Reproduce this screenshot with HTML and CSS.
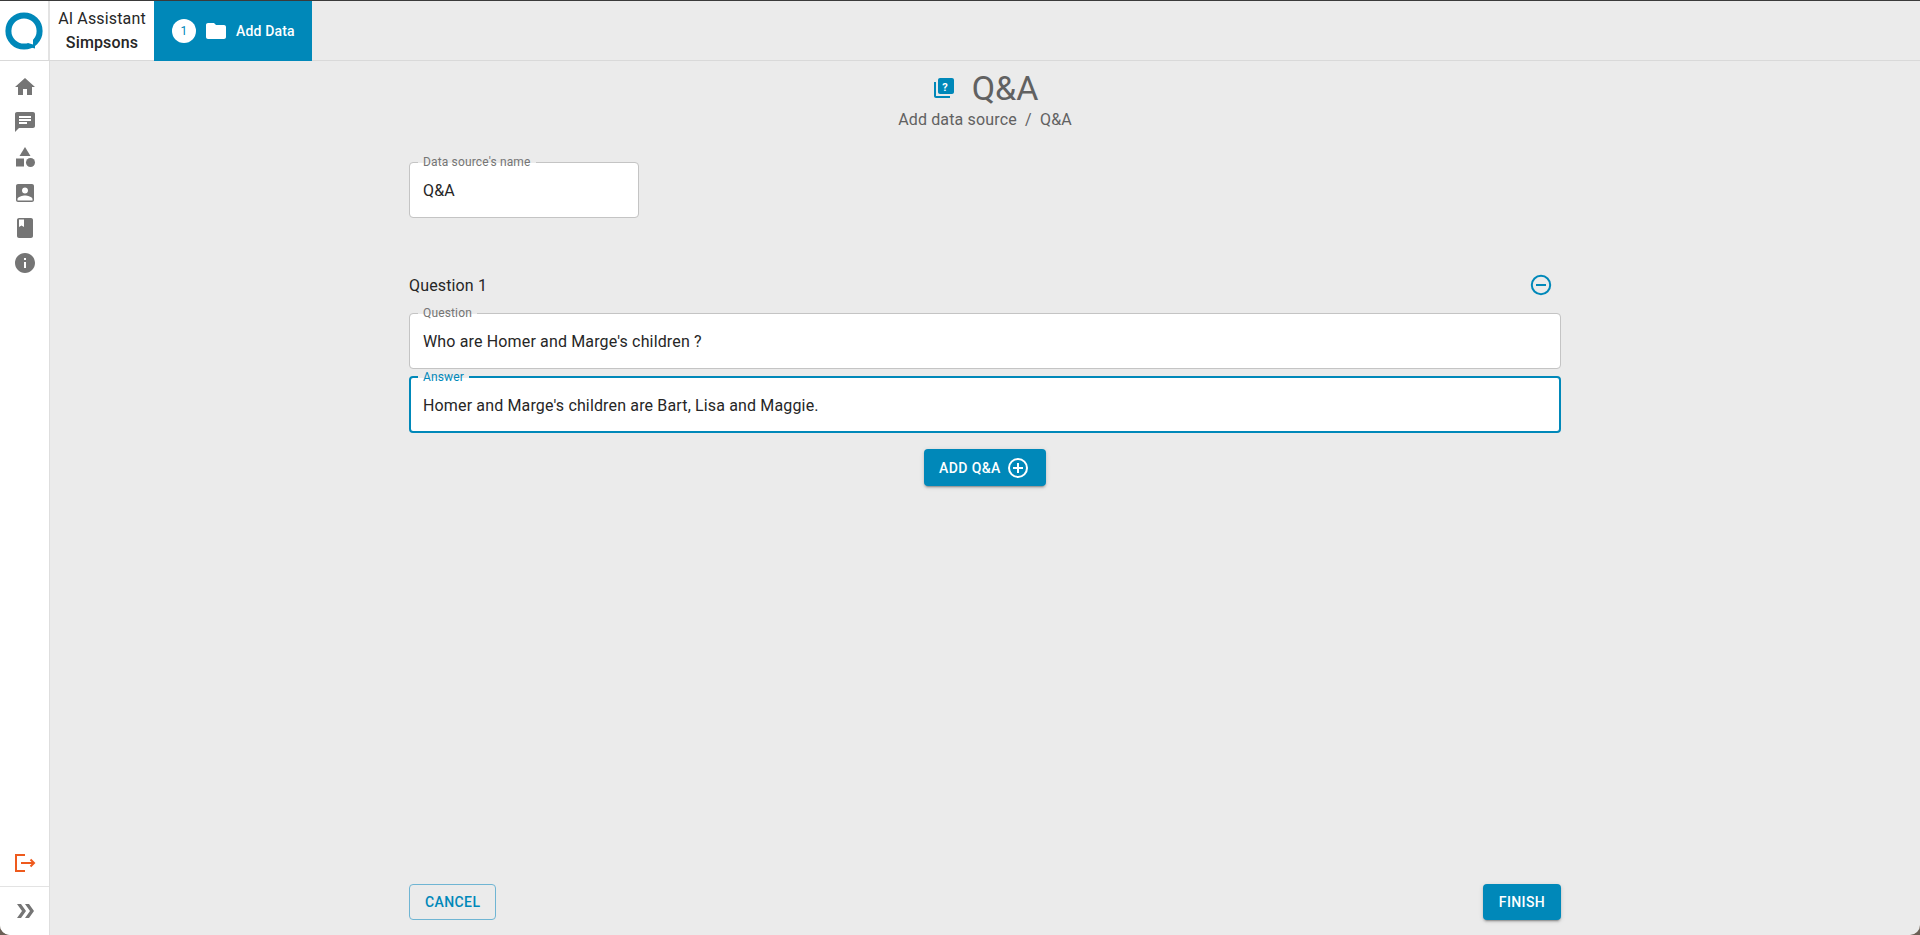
FILE: index.html
```html
<!DOCTYPE html>
<html lang="en">
<head>
    <meta charset="UTF-8">
    <meta name="viewport" content="width=device-width, initial-scale=1.0">
    <title>Q&amp;A</title>
    <link rel="stylesheet" href="styles.css">
</head>
<body>
    <div class="app">
        <header class="topbar">
            <div class="logo-cell">
                <svg class="logo" viewBox="0 0 38 38" width="38" height="38">
                    <circle cx="19" cy="19" r="15.600" fill="none" stroke="#0088b9" stroke-width="6"/>
                    <path fill="#0088b9" d="M24 35l6 1.500V26z"/>
                    <path fill="#fff" d="M18 29.500l10 3v-8z"/>
                </svg>
            </div>
            <div class="project">
                <span>AI Assistant</span>
                <strong>Simpsons</strong>
            </div>
            <div class="step">
                <span class="step-num">1</span>
                <svg viewBox="0 0 24 24" width="24" height="24"><path fill="#fff" d="M10 4H4c-1.100 0-2 .9-2 2v12c0 1.100.9 2 2 2h16c1.100 0 2-.9 2-2V8c0-1.100-.9-2-2-2h-8l-2-2z"/></svg>
                <span class="step-label">Add Data</span>
            </div>
        </header>

        <div class="layout">
            <nav class="sidebar">
                <div class="nav-icons">
                    <svg viewBox="0 0 24 24"><path d="M10 20v-6h4v6h5v-8h3L12 3 2 12h3v8z"/></svg>
                    <svg viewBox="0 0 24 24"><path d="M20 2H4c-1.100 0-2 .9-2 2v18l4-4h14c1.100 0 2-.9 2-2V4c0-1.100-.9-2-2-2zM6 9h12v2H6V9zm8 5H6v-2h8v2zm4-6H6V6h12v2z"/></svg>
                    <svg viewBox="0 0 24 24"><path d="M12 2l5.500 9h-11z"/><circle cx="17.500" cy="17.500" r="4.500"/><path d="M3 13.500h8v8H3z"/></svg>
                    <svg viewBox="0 0 24 24"><path d="M5 3h14c1.100 0 2 .9 2 2v14c0 1.100-.9 2-2 2H5c-1.100 0-2-.9-2-2V5c0-1.100.9-2 2-2zm7 3.500c-1.700 0-3 1.300-3 3s1.300 3 3 3 3-1.300 3-3-1.300-3-3-3zM4.500 19.500h15V18c0-2.300-5.200-3.500-7.500-3.500S4.500 15.700 4.500 18v1.500z"/></svg>
                    <svg viewBox="0 0 24 24"><path d="M18 2H6c-1.100 0-2 .9-2 2v16c0 1.100.9 2 2 2h12c1.100 0 2-.9 2-2V4c0-1.100-.9-2-2-2zM6 3.500h5V11L8.500 9.500 6 11V3.500z"/></svg>
                    <svg viewBox="0 0 24 24"><path d="M12 2C6.480 2 2 6.480 2 12s4.480 10 10 10 10-4.480 10-10S17.520 2 12 2zm1 15h-2v-6h2v6zm0-8h-2V7h2v2z"/></svg>
                </div>
                <div class="nav-bottom">
                    <div class="logout">
                        <svg viewBox="0 0 24 24" fill="none" stroke="#ee5a1d" stroke-width="2"><path d="M12 4H3v16h9"/><path d="M8 12h13"/><path d="M17.500 8.500L21 12l-3.500 3.500"/></svg>
                    </div>
                    <div class="expand">
                        <svg viewBox="0 0 24 24"><path d="M4 5h4l5 7-5 7H4l5-7z"/><path d="M12 5h4l5 7-5 7h-4l5-7z"/></svg>
                    </div>
                </div>
            </nav>

            <main class="content">
                <div class="page-title">
                    <svg viewBox="0 0 24 24" width="24" height="24"><path fill="#0088b9" d="M4 6H2v14c0 1.100.9 2 2 2h14v-2H4V6z"/><path fill="#0088b9" d="M20 2H8c-1.100 0-2 .9-2 2v12c0 1.100.9 2 2 2h12c1.100 0 2-.9 2-2V4c0-1.100-.9-2-2-2z"/></svg>
                    <span class="icon-mark">?</span>
                    <h1>Q&amp;A</h1>
                </div>
                <p class="crumbs">Add data source&nbsp; /&nbsp; Q&amp;A</p>

                <fieldset class="field field-name">
                    <legend>Data source's name</legend>
                    <div class="value">Q&amp;A</div>
                </fieldset>

                <div class="question-head">
                    <span>Question 1</span>
                    <svg viewBox="0 0 24 24" width="24" height="24"><circle cx="12" cy="12" r="9.200" fill="none" stroke="#0088b9" stroke-width="2"/><path d="M7 11h10v2H7z" fill="#0088b9"/></svg>
                </div>

                <fieldset class="field">
                    <legend>Question</legend>
                    <div class="value">Who are Homer and Marge's children ?</div>
                </fieldset>
                <fieldset class="field field-focus">
                    <legend>Answer</legend>
                    <div class="value">Homer and Marge's children are Bart, Lisa and Maggie.</div>
                </fieldset>

                <div class="add-row">
                    <button class="btn btn-primary btn-add">
                        <span>ADD Q&amp;A</span>
                        <svg viewBox="0 0 24 24" width="24" height="24"><circle cx="12" cy="12" r="9" fill="none" stroke="#fff" stroke-width="2"/><path d="M11 7h2v4h4v2h-4v4h-2v-4H7v-2h4z" fill="#fff"/></svg>
                    </button>
                </div>

                <div class="actions">
                    <button class="btn btn-outline">CANCEL</button>
                    <button class="btn btn-primary btn-finish">FINISH</button>
                </div>
            </main>
        </div>
    </div>
</body>
</html>
```

FILE: styles.css
```css
* {
    box-sizing: border-box;
}

html, body {
    height: 100%;
}

body {
    margin: 0;
    background-color: #6b5f55;
    font-family: Roboto, "Liberation Sans", sans-serif;
    color: #262626;
    letter-spacing: 0.15px;
    overflow: hidden;
}

.app {
    height: 100%;
    display: flex;
    flex-direction: column;
    background-color: #ebebeb;
    border-top: 1px solid #3a3a3a;
    border-radius: 0 0 10px 10px;
    overflow: hidden;
}

.topbar {
    height: 60px;
    flex-shrink: 0;
    display: flex;
    border-bottom: 1px solid #d9d9d9;
}

.logo-cell {
    width: 50px;
    background-color: #fff;
    border-right: 2px solid #e3e3e3;
    display: flex;
    align-items: center;
    justify-content: center;
}

.project {
    width: 104px;
    background-color: #fff;
    display: flex;
    flex-direction: column;
    align-items: center;
    justify-content: center;
    gap: 4px;
    font-size: 16px;
    line-height: 20px;
}

.project strong {
    font-weight: 500;
}

.step {
    width: 158px;
    margin-bottom: -1px;
    padding-left: 18px;
    background-color: #0088b9;
    color: #fff;
    display: flex;
    align-items: center;
}

.step-num {
    width: 24px;
    height: 24px;
    border-radius: 50%;
    background-color: #fff;
    color: #0088b9;
    font-size: 12px;
    display: flex;
    align-items: center;
    justify-content: center;
    margin-right: 8px;
}

.step-label {
    margin-left: 8px;
    font-size: 14px;
    font-weight: 500;
}

.layout {
    flex: 1;
    display: flex;
    min-height: 0;
}

.sidebar {
    width: 50px;
    background-color: #fff;
    border-right: 1px solid #dedede;
    display: flex;
    flex-direction: column;
    justify-content: space-between;
}

.sidebar svg {
    width: 24px;
    height: 24px;
    display: block;
    fill: #757575;
}

.nav-icons {
    padding-top: 14px;
    display: flex;
    flex-direction: column;
    align-items: center;
    gap: 11.200px;
}

.logout {
    height: 48px;
    display: flex;
    align-items: center;
    justify-content: center;
    border-bottom: 1px solid #e3e3e3;
}

.logout svg {
    fill: none;
}

.expand {
    height: 48px;
    display: flex;
    align-items: center;
    justify-content: center;
}

.content {
    flex: 1;
    width: 1152px;
    max-width: 1152px;
    margin: 0 auto;
    display: flex;
    flex-direction: column;
    padding-bottom: 15px;
}

.page-title {
    position: relative;
    height: 44px;
    margin-top: 5px;
    display: flex;
    align-items: center;
    justify-content: center;
    gap: 16px;
}

.icon-mark {
    position: absolute;
    left: 528px;
    top: 15px;
    width: 16px;
    color: #fff;
    font-size: 11px;
    font-weight: 700;
    line-height: 13px;
    text-align: center;
}

h1 {
    margin: 0;
    font-size: 34px;
    font-weight: 400;
    letter-spacing: 0;
    color: #616161;
}

.crumbs {
    margin: 0 0 26px;
    font-size: 16px;
    line-height: 20px;
    text-align: center;
    color: #616161;
}

.field {
    margin: 0;
    padding: 0 13px;
    height: 62px;
    background-color: transparent;
    border: 1px solid #c4c4c4;
    border-radius: 4px;
    background-image: linear-gradient(#fff, #fff);
    background-clip: padding-box;
    min-width: 0;
}

.field legend {
    padding: 0 5px;
    margin-left: -5px;
    font-size: 12px;
    line-height: 12px;
    color: #757575;
}

.value {
    height: 44px;
    display: flex;
    align-items: center;
    font-size: 16px;
}

.field-name {
    width: 230px;
}

.field-focus {
    margin-top: 2px;
    padding: 0 12px;
    border: 2px solid #0088b9;
}

.field-focus legend {
    color: #0088b9;
}

.question-head {
    margin-top: 52px;
    height: 30px;
    padding-right: 8px;
    display: flex;
    align-items: center;
    justify-content: space-between;
    font-size: 16px;
    margin-bottom: 7px;
}

.add-row {
    margin-top: 16px;
    display: flex;
    justify-content: center;
}

.btn {
    height: 36px;
    padding: 0 15px;
    border: none;
    border-radius: 4px;
    font-family: inherit;
    font-size: 14px;
    font-weight: 500;
    letter-spacing: 0.4px;
    white-space: nowrap;
}

.btn-primary {
    background-color: #0088b9;
    color: #fff;
    box-shadow: 0 3px 1px -2px rgba(0,0,0,.2), 0 2px 2px 0 rgba(0,0,0,.14), 0 1px 5px 0 rgba(0,0,0,.12);
}

.btn-add {
    display: flex;
    align-items: center;
    gap: 5px;
    height: 37px;
    width: 122px;
}

.btn-finish {
    width: 78px;
    padding: 0;
}

.btn-outline {
    background-color: transparent;
    color: #0088b9;
    border: 1px solid #6fb5d3;
}

.actions {
    margin-top: auto;
    display: flex;
    justify-content: space-between;
    align-items: center;
}
```
